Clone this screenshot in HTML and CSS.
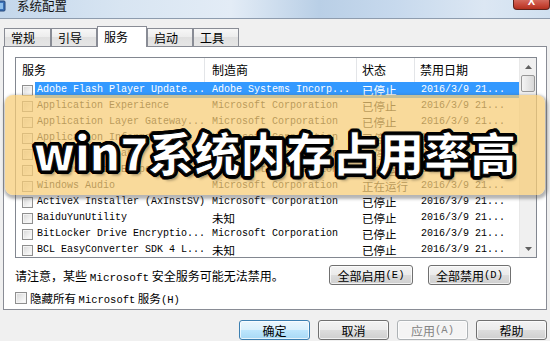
FILE: index.html
```html
<!DOCTYPE html>
<html>
<head>
<meta charset="utf-8">
<link rel="stylesheet" href="styles.css">
</head>
<body>
<div class="window">
  <div class="titlebar">
    <svg class="app-icon" width="6" height="13" viewBox="10 0 6 13">
      <rect x="1" y="1" width="14" height="10" rx="1" fill="#3d72b8" stroke="#26487a" stroke-width="1"/>
      <rect x="3" y="3" width="10" height="6" fill="#8fc0ec"/>
    </svg>
    <span class="title">系统配置</span>
    <div class="close">X</div>
  </div>
  <div class="dialog">
    <div class="tabs">
      <div class="tab t1">常规</div>
      <div class="tab">引导</div>
      <div class="tab active">服务</div>
      <div class="tab">启动</div>
      <div class="tab">工具</div>
    </div>
    <div class="panel">
      <div class="list">
        <div class="list-main">
          <div class="header">
            <div class="hcell h1">服务</div>
            <div class="hcell h2">制造商</div>
            <div class="hcell h3">状态</div>
            <div class="hcell h4">禁用日期</div>
          </div>
          <div class="row selected"><span class="c-check"><i class="cb"></i></span><span class="c-name">Adobe Flash Player Update...</span><span class="c-mfr">Adobe Systems Incorp...</span><span class="c-status">已停止</span><span class="c-date">2016/3/9 21...</span></div>
          <div class="row"><span class="c-check"><i class="cb"></i></span><span class="c-name">Application Experience</span><span class="c-mfr">Microsoft Corporation</span><span class="c-status">已停止</span><span class="c-date">2016/3/9 21...</span></div>
          <div class="row"><span class="c-check"><i class="cb"></i></span><span class="c-name">Application Layer Gateway...</span><span class="c-mfr">Microsoft Corporation</span><span class="c-status">已停止</span><span class="c-date">2016/3/9 21...</span></div>
          <div class="row"><span class="c-check"><i class="cb"></i></span><span class="c-name">Application Information</span><span class="c-mfr">Microsoft Corporation</span><span class="c-status">已停止</span><span class="c-date">2016/3/9 21...</span></div>
          <div class="row"><span class="c-check"><i class="cb"></i></span><span class="c-name">Credential Manager</span><span class="c-mfr">Microsoft Corporation</span><span class="c-status">已停止</span><span class="c-date">2016/3/9 21...</span></div>
          <div class="row"><span class="c-check"><i class="cb"></i></span><span class="c-name">Windows Audio Endpoint...</span><span class="c-mfr">Microsoft Corporation</span><span class="c-status">正在运行</span><span class="c-date">2016/3/9 21...</span></div>
          <div class="row"><span class="c-check"><i class="cb"></i></span><span class="c-name">Windows Audio</span><span class="c-mfr">Microsoft Corporation</span><span class="c-status">正在运行</span><span class="c-date">2016/3/9 21...</span></div>
          <div class="row"><span class="c-check"><i class="cb"></i></span><span class="c-name">ActiveX Installer (AxInstSV)</span><span class="c-mfr">Microsoft Corporation</span><span class="c-status">已停止</span><span class="c-date">2016/3/9 21...</span></div>
          <div class="row"><span class="c-check"><i class="cb"></i></span><span class="c-name">BaiduYunUtility</span><span class="c-mfr cj">未知</span><span class="c-status">已停止</span><span class="c-date">2016/3/9 21...</span></div>
          <div class="row"><span class="c-check"><i class="cb"></i></span><span class="c-name">BitLocker Drive Encryptio...</span><span class="c-mfr">Microsoft Corporation</span><span class="c-status">已停止</span><span class="c-date">2016/3/9 21...</span></div>
          <div class="row"><span class="c-check"><i class="cb"></i></span><span class="c-name">BCL EasyConverter SDK 4 L...</span><span class="c-mfr cj">未知</span><span class="c-status">已停止</span><span class="c-date">2016/3/9 21...</span></div>
          <div class="row"><span class="c-check"><i class="cb"></i></span><span class="c-name">BDESVC</span><span class="c-mfr">Microsoft Corporation</span><span class="c-status">已停止</span><span class="c-date">2016/3/9 21...</span></div>
        </div>
        <div class="scrollbar">
          <div class="sb-arrow">
            <svg width="7" height="4" viewBox="0 0 7 4"><path d="M0 4 L3.5 0 L7 4 Z" fill="#606060"/></svg>
          </div>
          <div class="sb-thumb"></div>
          <div class="sb-track"></div>
          <div class="sb-arrow">
            <svg width="7" height="4" viewBox="0 0 7 4"><path d="M0 0 L3.5 4 L7 0 Z" fill="#606060"/></svg>
          </div>
        </div>
      </div>
      <div class="notice-row">
        <span class="notice">请注意，某些 <span class="mono">Microsoft</span> 安全服务可能无法禁用。</span>
        <div class="notice-buttons">
          <div class="btn w84">全部启用<span class="mono">(E)</span></div>
          <div class="btn w83">全部禁用<span class="mono">(D)</span></div>
        </div>
      </div>
      <div class="hide-row">
        <i class="cb big"></i>
        <span>隐藏所有 <span class="mono">Microsoft</span> 服务<span class="mono">(H)</span></span>
      </div>
    </div>
    <div class="buttons">
      <div class="btn default">确定</div>
      <div class="btn">取消</div>
      <div class="btn disabled">应用<span class="mono">(A)</span></div>
      <div class="btn">帮助</div>
    </div>
  </div>
  <div class="overlay"><span class="headline">win7系统内存占用率高</span></div>
</div>
</body>
</html>
```

FILE: styles.css
```css
* { box-sizing: border-box; }
body {
  margin: 0;
  width: 550px;
  height: 341px;
  overflow: hidden;
  background: #f0f0f0;
  font-family: "Noto Sans CJK SC", "Noto Sans", sans-serif;
  font-size: 12px;
  color: #000;
}
.window {
  position: relative;
  width: 550px;
  height: 341px;
  overflow: hidden;
}
.titlebar {
  height: 19px;
  border-bottom: 1px solid #8e9cae;
  display: flex;
  align-items: flex-start;
  background: linear-gradient(90deg, #c4d7eb 0%, #d8e5f2 22%, #e3ecf6 42%, #b9cfe6 58%, #c7d9ed 72%, #dce7f3 88%, #d0e0f0 100%);
}
.app-icon { display: block; margin-top: 0; }
.title {
  margin-left: 11px;
  font-size: 12.5px;
  line-height: 12px;
  color: #111;
}
.close {
  margin-left: auto;
  width: 37px;
  height: 10px;
  border: 1px solid #5e231c;
  border-top: none;
  border-radius: 0 0 4px 4px;
  background: linear-gradient(#d3695c, #c84a3b 50%, #b3301f 100%);
  color: #fff;
  font-family: "Liberation Sans", sans-serif;
  font-weight: bold;
  font-size: 11px;
  line-height: 2px;
  text-align: center;
}
.dialog { padding: 0 3px; }
.tabs {
  display: flex;
  align-items: flex-end;
  height: 20px;
  margin-top: 7px;
  padding-left: 1px;
}
.tab {
  width: 46px;
  height: 18px;
  border: 1px solid #898c95;
  border-bottom: none;
  background: linear-gradient(#f7f7f7, #ececec 50%, #e0e0e0 50%, #e6e6e6);
  padding-left: 6px;
  font-size: 12px;
  line-height: 17px;
}
.tab.t1 { width: 47px; }
.tab.active {
  width: 50px;
  height: 21px;
  margin-bottom: -1px;
  background: #ffffff;
  position: relative;
  z-index: 1;
  line-height: 19px;
}
.panel {
  width: 544px;
  height: 264px;
  border: 1px solid #898c95;
  background: #ffffff;
  padding: 10px 0 0 11px;
}
.list {
  width: 522px;
  height: 201px;
  border: 1px solid #828790;
  background: #fff;
  display: flex;
  overflow: hidden;
}
.list-main { width: 503px; flex: none; }
.header {
  display: grid;
  grid-template-columns: 189px 152px 58px 104px;
  height: 24px;
}
.hcell {
  font-size: 12px;
  line-height: 23px;
  border-right: 1px solid #e3e5e8;
  white-space: nowrap;
}
.h1 { padding-left: 6px; }
.h2 { padding-left: 7px; }
.h3 { padding-left: 5px; }
.h4 { padding-left: 5px; border-right: none; }
.row {
  display: grid;
  grid-template-columns: 19px 170px 152px 58px 104px;
  height: 16px;
  line-height: 16px;
  font-family: "Liberation Mono", "Noto Sans CJK SC", monospace;
  font-size: 10px;
  white-space: nowrap;
}
.row > span { overflow: hidden; }
.c-check { display: flex; align-items: center; padding-left: 6px; }
.c-name { padding-left: 2px; }
.c-mfr { padding-left: 7px; }
.c-status { padding-left: 5px; font-family: "Noto Sans CJK SC", sans-serif; font-size: 11.5px; }
.c-date { padding-left: 6px; }
.cj { font-family: "Noto Sans CJK SC", sans-serif; font-size: 11.5px; }
.row.selected .c-name,
.row.selected .c-mfr,
.row.selected .c-status,
.row.selected .c-date {
  background: #3399ff;
  color: #fff;
}
.cb {
  display: block;
  width: 11px;
  height: 11px;
  border: 1px solid #8f8f8f;
  background: linear-gradient(135deg, #d6d6d6, #f4f4f4 70%, #ffffff);
  box-shadow: inset 0 0 0 1px #f4f4f4;
}
.cb.big { width: 12px; height: 12px; }
.scrollbar {
  width: 17px;
  flex: none;
  display: flex;
  flex-direction: column;
  background: #f0f0f0;
  border-left: 1px solid #e8e8e8;
}
.sb-arrow {
  height: 17px;
  display: flex;
  align-items: center;
  justify-content: center;
  flex: none;
}
.sb-thumb {
  height: 17px;
  margin: 0 1px;
  border: 1px solid #979797;
  border-radius: 2px;
  background: linear-gradient(90deg, #f4f4f4, #e6e6e6 50%, #d8d8d8);
  flex: none;
}
.sb-track { flex: 1; }
.mono { font-family: "Liberation Mono", monospace; font-size: 10.5px; }
.notice-row {
  display: flex;
  align-items: center;
  width: 496px;
  height: 20px;
  margin-top: 7px;
}
.notice { font-size: 12px; white-space: nowrap; }
.notice .mono { font-size: 11px; }
.notice-buttons {
  margin-left: auto;
  display: flex;
  gap: 15px;
}
.btn {
  height: 20px;
  width: 72px;
  border: 1px solid #707070;
  border-radius: 3px;
  background: linear-gradient(#f3f3f3, #ebebeb 50%, #dddddd 50%, #cfcfcf);
  box-shadow: inset 0 0 0 1px rgba(255,255,255,0.7);
  display: flex;
  align-items: center;
  justify-content: center;
  font-size: 12px;
  white-space: nowrap;
}
.btn.w84 { width: 84px; }
.btn.w83 { width: 83px; }
.btn.default {
  border-color: #3c7fb1;
  background: linear-gradient(#eaf6fd, #d9f0fc 50%, #bee6fd 50%, #a7d9f5);
}
.btn.disabled {
  border-color: #adb2b5;
  background: #f4f4f4;
  color: #838383;
}
.hide-row {
  display: flex;
  align-items: center;
  gap: 3px;
  height: 14px;
  margin-top: 6px;
  font-size: 11.5px;
}
.buttons {
  display: flex;
  gap: 8px;
  margin-top: 10px;
  padding-left: 236px;
}
.overlay {
  position: absolute;
  left: 5px;
  top: 95px;
  width: 540px;
  height: 100px;
  border-radius: 8px;
  background: rgba(247, 205, 120, 0.74);
  box-shadow: 1px 2px 3px 2px rgba(90, 90, 90, 0.45);
  display: flex;
  justify-content: center;
  align-items: center;
  padding-top: 12px;
}
.headline {
  font-family: "Noto Sans CJK SC", sans-serif;
  font-weight: 900;
  font-size: 46px;
  line-height: 1;
  color: #fff;
  white-space: nowrap;
  -webkit-text-stroke: 1px #000;
  text-shadow:
    3px 0 0 #000, -3px 0 0 #000, 0 3px 0 #000, 0 -3px 0 #000,
    2px 2px 0 #000, -2px 2px 0 #000, 2px -2px 0 #000, -2px -2px 0 #000,
    3px 1px 0 #000, -3px 1px 0 #000, 3px -1px 0 #000, -3px -1px 0 #000,
    1px 3px 0 #000, -1px 3px 0 #000, 1px -3px 0 #000, -1px -3px 0 #000,
    3px 4px 3px rgba(0,0,0,0.4);
}
```
